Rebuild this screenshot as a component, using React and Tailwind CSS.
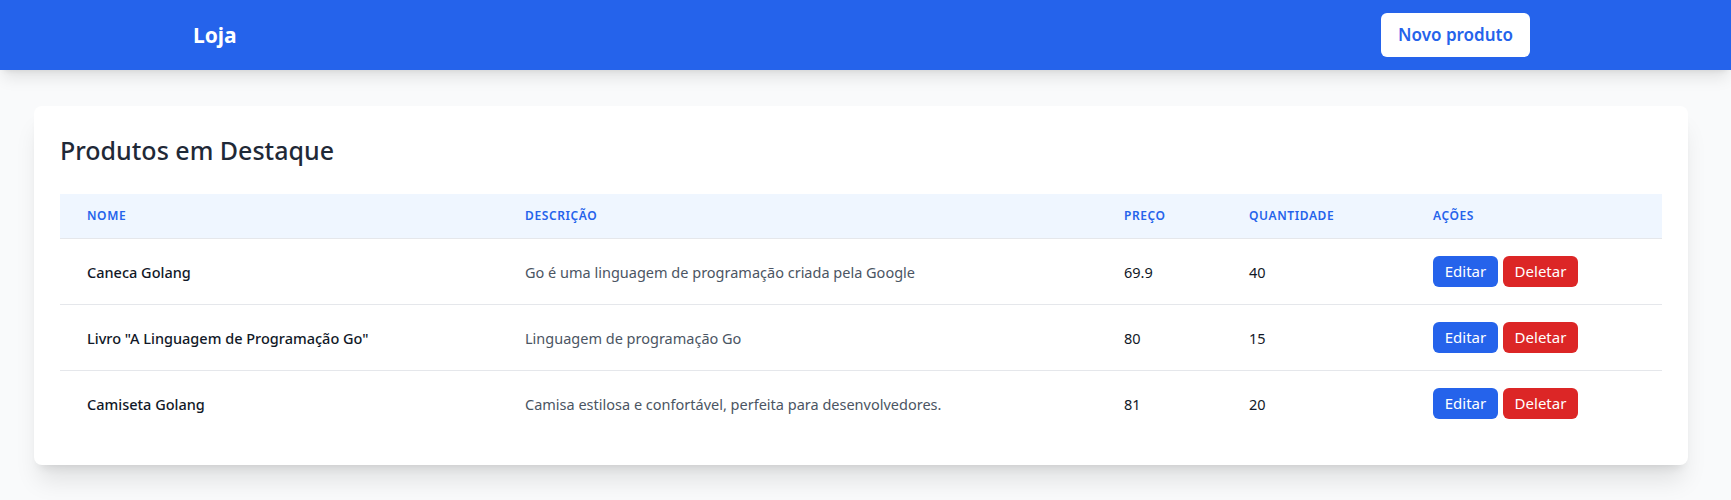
import React from "react";

const produtos = [
  { nome: "Caneca Golang", descricao: "Go é uma linguagem de programação criada pela Google", preco: "69.9", quantidade: "40" },
  { nome: 'Livro "A Linguagem de Programação Go"', descricao: "Linguagem de programação Go", preco: "80", quantidade: "15" },
  { nome: "Camiseta Golang", descricao: "Camisa estilosa e confortável, perfeita para desenvolvedores.", preco: "81", quantidade: "20" },
];

const th = "py-[14px] pl-[27px] text-left text-[12px] font-semibold uppercase leading-4 tracking-wider text-[#2563eb]";

export default function App() {
  return (
    <div className="min-h-[500px] bg-[#f9fafb] font-['Noto_Sans',sans-serif]">
      <header className="relative z-10 flex h-[70px] items-center justify-between bg-[#2563eb] pl-[193px] pr-[201px] shadow-lg">
        <span className="text-[21px] font-bold leading-none text-white">Loja</span>
        <button className="h-[44px] w-[149px] rounded-md bg-white text-[17px] font-semibold text-[#2563eb]">
          Novo produto
        </button>
      </header>
      <main className="pt-9 pb-[35px]">
        <div className="ml-[34px] w-[1654px] rounded-lg bg-white px-[26px] pt-[26px] pb-[29px] shadow-xl">
          <h1 className="mb-[26px] text-[25px] font-medium leading-[36px] text-[#1f2937]">Produtos em Destaque</h1>
          <table className="w-full table-fixed">
            <thead>
              <tr className="border-b border-[#e5e7eb] bg-[#eff6ff]">
                <th className={`w-[438px] ${th}`}>Nome</th>
                <th className={`w-[599px] ${th}`}>Descrição</th>
                <th className={`w-[125px] ${th}`}>Preço</th>
                <th className={`w-[184px] ${th}`}>Quantidade</th>
                <th className={th}>Ações</th>
              </tr>
            </thead>
            <tbody className="divide-y divide-[#e5e7eb]">
              {produtos.map((p) => (
                <tr key={p.nome}>
                  <td className="py-[17px] pl-[27px] text-[14.5px] font-medium leading-6 text-[#111827]">{p.nome}</td>
                  <td className="py-[17px] pl-[27px] text-[14.5px] leading-6 text-[#4b5563]">{p.descricao}</td>
                  <td className="py-[17px] pl-[27px] text-[14.5px] leading-6 text-[#111827]">{p.preco}</td>
                  <td className="py-[17px] pl-[27px] text-[14.5px] leading-6 text-[#111827]">{p.quantidade}</td>
                  <td className="py-[17px] pl-[27px]">
                    <div className="flex gap-[5px]">
                      <button className="h-[31px] w-[65px] rounded-md bg-[#2563eb] text-[15px] text-white">Editar</button>
                      <button className="h-[31px] w-[75px] rounded-md bg-[#dc2626] text-[15px] text-white">Deletar</button>
                    </div>
                  </td>
                </tr>
              ))}
            </tbody>
          </table>
        </div>
      </main>
    </div>
  );
}
